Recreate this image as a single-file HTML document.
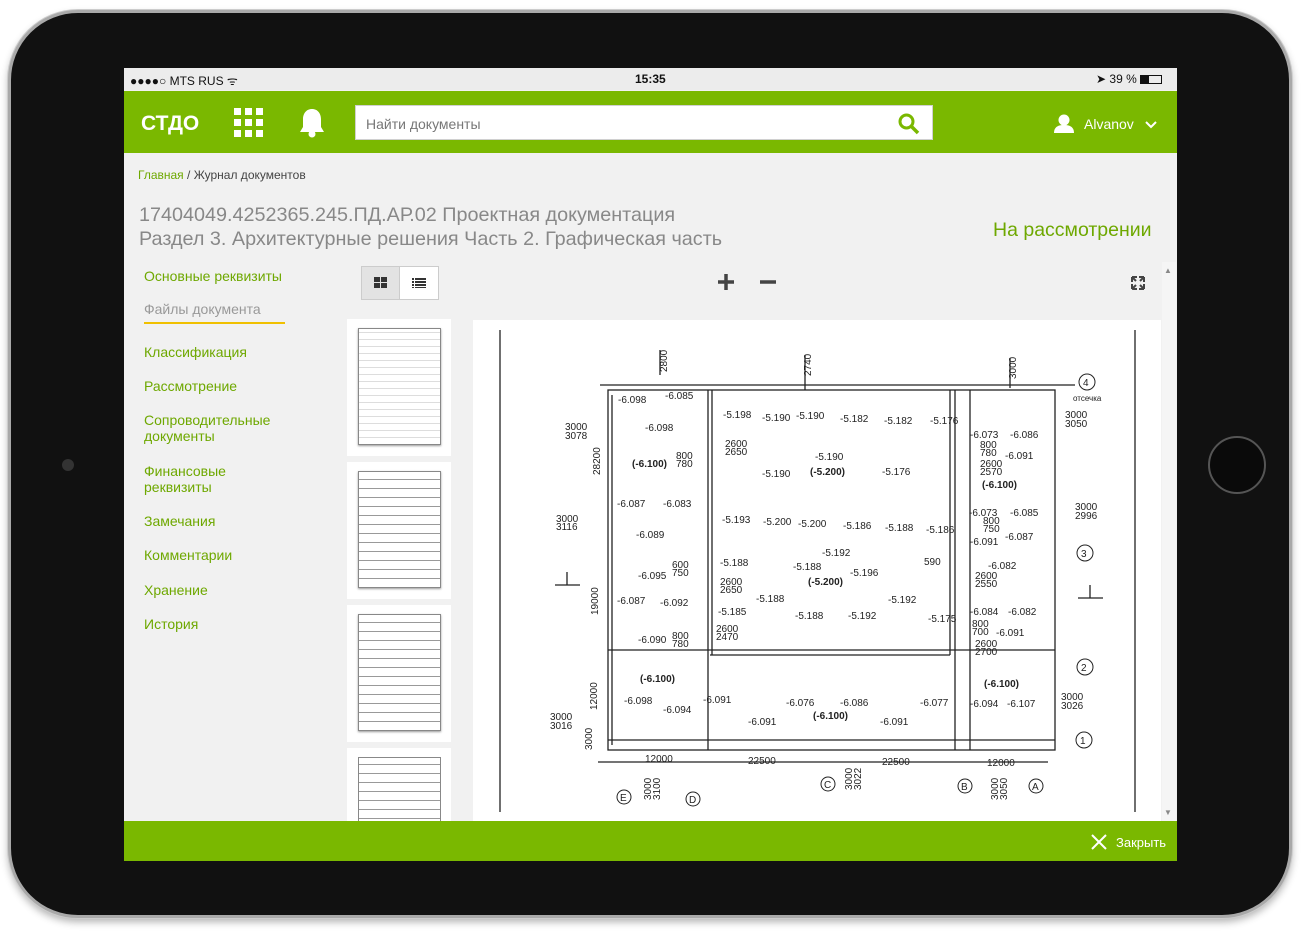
<!DOCTYPE html><html><head><meta charset="utf-8"><style>
*{margin:0;padding:0;box-sizing:border-box}
body{width:1314px;height:936px;background:#fff;position:relative;overflow:hidden;font-family:"Liberation Sans",sans-serif}
.dev{position:absolute;left:8px;top:10px;width:1284px;height:908px;border-radius:70px;background:#111;border:3px solid #a9a9a9;box-shadow:0 0 0 1px #ccc,0 4px 8px rgba(0,0,0,.3)}
.scr{position:absolute;left:124px;top:68px;width:1053px;height:793px;background:#f1f1f1;overflow:hidden}
.abs{position:absolute}
.nav a{position:absolute;left:20px;color:#6ea800;font-size:14px;line-height:16px;text-decoration:none}
svg text{font-family:"Liberation Sans",sans-serif}
</style></head><body>
<div class="dev"></div>
<div class="abs" style="left:1208px;top:436px;width:58px;height:58px;border-radius:50%;border:2px solid #555;background:#0a0a0a"></div>
<div class="abs" style="left:62px;top:459px;width:12px;height:12px;border-radius:50%;background:#333"></div>
<div class="scr">
 <div class="abs" style="left:0;top:0;width:1053px;height:22px;background:#ececec;font-size:12px;color:#111">
  <span class="abs" style="left:6px;top:4px">●●●●○ MTS RUS ᯤ</span>
  <span class="abs" style="left:511px;top:4px;font-weight:bold">15:35</span>
  <span class="abs" style="left:972px;top:4px">➤ 39 % <span style="display:inline-block;width:22px;height:9px;border:1px solid #111;vertical-align:-1px"><span style="display:block;width:8px;height:7px;background:#111"></span></span></span>
 </div>
 <div class="abs" style="left:0;top:23px;width:1053px;height:62px;background:#7ab800">
  <span class="abs" style="left:17px;top:21px;color:#fff;font-size:21px;font-weight:bold">СТДО</span>
  <svg class="abs" style="left:110px;top:17px" width="30" height="30"><g fill="#fff"><rect x="0" y="0" width="7" height="7"/><rect x="11" y="0" width="7" height="7"/><rect x="22" y="0" width="7" height="7"/><rect x="0" y="11" width="7" height="7"/><rect x="11" y="11" width="7" height="7"/><rect x="22" y="11" width="7" height="7"/><rect x="0" y="22" width="7" height="7"/><rect x="11" y="22" width="7" height="7"/><rect x="22" y="22" width="7" height="7"/></g></svg>
  <svg class="abs" style="left:173px;top:16px" width="30" height="32"><path d="M15 2c-6 0-9 5-9 10v8l-3 5h24l-3-5v-8c0-5-3-10-9-10z" fill="#fff"/><circle cx="15" cy="27" r="3.5" fill="#fff"/></svg>
  <div class="abs" style="left:231px;top:14px;width:578px;height:35px;background:#fff;border:1px solid #d0d0d0;font-size:14px;color:#777;padding:10px 10px">Найти документы</div>
  <svg class="abs" style="left:774px;top:22px" width="22" height="22"><circle cx="8.5" cy="8.5" r="6.5" stroke="#7ab800" stroke-width="3" fill="none"/><path d="M13 13l7 7" stroke="#7ab800" stroke-width="3.5"/></svg>
  <svg class="abs" style="left:929px;top:23px" width="22" height="20"><circle cx="11" cy="6" r="5.5" fill="#fff"/><path d="M1 19c0-6 4-8 10-8s10 2 10 8z" fill="#fff"/></svg>
  <span class="abs" style="left:960px;top:25px;color:#fff;font-size:14px">Alvanov</span>
  <svg class="abs" style="left:1021px;top:29px" width="12" height="10"><path d="M1 2l5 5 5-5" stroke="#fff" stroke-width="2" fill="none"/></svg>
 </div>
 <div class="abs" style="left:14px;top:100px;font-size:12px;color:#444"><span style="color:#6ea800">Главная</span> / Журнал документов</div>
 <div class="abs" style="left:15px;top:135px;font-size:19.8px;color:#888;line-height:24px">17404049.4252365.245.ПД.АР.02 Проектная документация<br>Раздел 3. Архитектурные решения Часть 2. Графическая часть</div>
 <div class="abs" style="left:869px;top:151px;font-size:19.5px;color:#6ea800">На рассмотрении</div>
 <div class="nav">
  <a style="top:200px">Основные реквизиты</a>
  <a style="top:233px;color:#999">Файлы документа</a>
  <div class="abs" style="left:20px;top:254px;width:141px;height:2px;background:#f0c000"></div>
  <a style="top:276px">Классификация</a>
  <a style="top:310px">Рассмотрение</a>
  <a style="top:344px">Сопроводительные<br>документы</a>
  <a style="top:395px">Финансовые<br>реквизиты</a>
  <a style="top:445px">Замечания</a>
  <a style="top:479px">Комментарии</a>
  <a style="top:514px">Хранение</a>
  <a style="top:548px">История</a>
 </div>
 <div class="abs" style="left:237px;top:198px;width:78px;height:34px;border:1px solid #ccc;background:#fff"><div style="width:38px;height:32px;background:#e3e3e3;border-right:1px solid #ccc"></div></div>
 <svg class="abs" style="left:250px;top:208px" width="60" height="14"><g fill="#333"><rect x="0" y="1" width="6" height="5"/><rect x="7" y="1" width="6" height="5"/><rect x="0" y="7" width="6" height="5"/><rect x="7" y="7" width="6" height="5"/><rect x="38" y="2" width="2" height="2"/><rect x="41" y="2" width="11" height="2"/><rect x="38" y="5" width="2" height="2"/><rect x="41" y="5" width="11" height="2"/><rect x="38" y="8" width="2" height="2"/><rect x="41" y="8" width="11" height="2"/><rect x="38" y="11" width="2" height="1"/><rect x="41" y="11" width="11" height="1"/></g></svg>
 <svg class="abs" style="left:590px;top:204px" width="70" height="20"><path d="M4 10h16M12 2v16" stroke="#444" stroke-width="3.5"/><path d="M46 10h16" stroke="#444" stroke-width="3.5"/></svg>
 <svg class="abs" style="left:1007px;top:208px" width="14" height="14"><path d="M1 1h5M1 1v5M1 1l4 4M13 1h-5M13 1v5M13 1l-4 4M1 13h5M1 13v-5M1 13l4-4M13 13h-5M13 13v-5M13 13l-4-4" stroke="#444" stroke-width="2"/></svg>
 <div class="abs" style="left:1038px;top:194px;width:14px;height:560px;background:#f5f5f5"></div>
 <div class="abs" style="left:1040px;top:198px;font-size:8px;color:#888">▲</div>
 <div class="abs" style="left:1040px;top:740px;font-size:8px;color:#888">▼</div>
 <div class="abs" style="left:223px;top:251px;width:104px;height:137px;background:#fff"><div style="margin:9px 0 0 11px;width:83px;height:117px;border:1px solid #888;box-shadow:0 1px 2px #999;background:repeating-linear-gradient(0deg,#fff 0 6px,#ddd 6px 7px)"></div></div>
 <div class="abs" style="left:223px;top:394px;width:104px;height:137px;background:#fff"><div style="margin:9px 0 0 11px;width:83px;height:117px;border:1px solid #888;box-shadow:0 1px 2px #999;background:repeating-linear-gradient(0deg,#fff 0 8px,#999 8px 9px)"></div></div>
 <div class="abs" style="left:223px;top:537px;width:104px;height:137px;background:#fff"><div style="margin:9px 0 0 11px;width:83px;height:117px;border:1px solid #888;box-shadow:0 1px 2px #999;background:repeating-linear-gradient(0deg,#fff 0 8px,#999 8px 9px)"></div></div>
 <div class="abs" style="left:223px;top:680px;width:104px;height:80px;background:#fff"><div style="margin:9px 0 0 11px;width:83px;height:80px;border:1px solid #888;background:repeating-linear-gradient(0deg,#fff 0 8px,#999 8px 9px)"></div></div>
 <svg class="abs" style="left:349px;top:252px" width="688" height="502" viewBox="473 320 688 502">
  <rect x="473" y="320" width="688" height="502" fill="#fff"/>
  <g stroke="#222" fill="none" stroke-width="1.3">
   <path d="M500 330V812M1135 330V812"/>
   <rect x="608" y="390" width="447" height="360"/>
   <path d="M612 395v350M708 390v360M712 390v265M950 390v265M955 390v360M970 390v360M710 655h240M608 650h447M608 740h447"/>
   <path d="M660 350v25M805 355v35M1010 358v30M600 385h475M598 762h450"/>
   <path d="M555 585h25M567 572v13M1078 598h25M1090 585v13"/>
  </g>
  <g fill="none" stroke="#222"><circle cx="1087" cy="382" r="8"/><circle cx="1085" cy="553" r="8"/><circle cx="1085" cy="667" r="8"/><circle cx="1084" cy="740" r="8"/><circle cx="624" cy="797" r="7"/><circle cx="693" cy="799" r="7"/><circle cx="828" cy="784" r="7"/><circle cx="965" cy="786" r="7"/><circle cx="1036" cy="786" r="7"/></g>
  <g font-size="10" fill="#222">
   <text x="1083" y="386">4</text><text x="1081" y="557">3</text><text x="1081" y="671">2</text><text x="1080" y="744">1</text><text x="620" y="801">E</text><text x="689" y="803">D</text><text x="824" y="788">C</text><text x="961" y="790">B</text><text x="1032" y="790">A</text>
   <text x="618" y="403">-6.098</text><text x="665" y="399">-6.085</text><text x="645" y="431">-6.098</text><text x="723" y="418">-5.198</text><text x="762" y="421">-5.190</text><text x="796" y="419">-5.190</text><text x="840" y="422">-5.182</text><text x="884" y="424">-5.182</text><text x="930" y="424">-5.176</text>
   <text x="970" y="438">-6.073</text><text x="1010" y="438">-6.086</text><text x="1065" y="418">3000</text><text x="1065" y="427">3050</text>
   <text x="565" y="430">3000</text><text x="565" y="439">3078</text><text x="725" y="447">2600</text><text x="725" y="455">2650</text><text x="676" y="459">800</text><text x="676" y="467">780</text>
   <text x="632" y="467" font-weight="bold">(-6.100)</text><text x="815" y="460">-5.190</text><text x="810" y="475" font-weight="bold">(-5.200)</text><text x="762" y="477">-5.190</text><text x="882" y="475">-5.176</text>
   <text x="980" y="448">800</text><text x="980" y="456">780</text><text x="1005" y="459">-6.091</text><text x="980" y="467">2600</text><text x="980" y="475">2570</text><text x="982" y="488" font-weight="bold">(-6.100)</text>
   <text x="617" y="507">-6.087</text><text x="663" y="507">-6.083</text><text x="556" y="522">3000</text><text x="556" y="530">3116</text><text x="636" y="538">-6.089</text>
   <text x="722" y="523">-5.193</text><text x="763" y="525">-5.200</text><text x="798" y="527">-5.200</text><text x="843" y="529">-5.186</text><text x="885" y="531">-5.188</text><text x="926" y="533">-5.186</text>
   <text x="969" y="516">-6.073</text><text x="1010" y="516">-6.085</text><text x="1075" y="510">3000</text><text x="1075" y="519">2996</text><text x="983" y="524">800</text><text x="983" y="532">750</text><text x="970" y="545">-6.091</text><text x="1005" y="540">-6.087</text>
   <text x="822" y="556">-5.192</text><text x="720" y="566">-5.188</text><text x="793" y="570">-5.188</text><text x="850" y="576">-5.196</text><text x="808" y="585" font-weight="bold">(-5.200)</text><text x="924" y="565">590</text>
   <text x="638" y="579">-6.095</text><text x="672" y="568">600</text><text x="672" y="576">750</text><text x="720" y="585">2600</text><text x="720" y="593">2650</text><text x="988" y="569">-6.082</text><text x="975" y="579">2600</text><text x="975" y="587">2550</text>
   <text x="617" y="604">-6.087</text><text x="660" y="606">-6.092</text><text x="756" y="602">-5.188</text><text x="718" y="615">-5.185</text><text x="888" y="603">-5.192</text>
   <text x="970" y="615">-6.084</text><text x="1008" y="615">-6.082</text><text x="795" y="619">-5.188</text><text x="848" y="619">-5.192</text><text x="928" y="622">-5.175</text>
   <text x="716" y="632">2600</text><text x="716" y="640">2470</text><text x="638" y="643">-6.090</text><text x="672" y="639">800</text><text x="672" y="647">780</text>
   <text x="972" y="627">800</text><text x="972" y="635">700</text><text x="996" y="636">-6.091</text><text x="975" y="647">2600</text><text x="975" y="655">2700</text>
   <text x="640" y="682" font-weight="bold">(-6.100)</text><text x="984" y="687" font-weight="bold">(-6.100)</text><text x="624" y="704">-6.098</text><text x="663" y="713">-6.094</text><text x="703" y="703">-6.091</text><text x="786" y="706">-6.076</text><text x="840" y="706">-6.086</text><text x="920" y="706">-6.077</text><text x="970" y="707">-6.094</text><text x="1007" y="707">-6.107</text><text x="1061" y="700">3000</text><text x="1061" y="709">3026</text>
   <text x="748" y="725">-6.091</text><text x="813" y="719" font-weight="bold">(-6.100)</text><text x="880" y="725">-6.091</text><text x="550" y="720">3000</text><text x="550" y="729">3016</text>
   <text x="645" y="762">12000</text><text x="748" y="764">22500</text><text x="882" y="765">22500</text><text x="987" y="766">12000</text><text x="1073" y="401" font-size="8">отсечка</text>
  </g>
  <g font-size="10" fill="#222">
   <text transform="translate(667,372) rotate(-90)">2800</text><text transform="translate(811,376) rotate(-90)">2740</text><text transform="translate(1016,379) rotate(-90)">3000</text>
   <text transform="translate(600,475) rotate(-90)">28200</text><text transform="translate(598,615) rotate(-90)">19000</text><text transform="translate(597,710) rotate(-90)">12000</text><text transform="translate(592,750) rotate(-90)">3000</text>
   <text transform="translate(651,800) rotate(-90)">3000</text><text transform="translate(660,800) rotate(-90)">3100</text><text transform="translate(852,790) rotate(-90)">3000</text><text transform="translate(861,790) rotate(-90)">3022</text><text transform="translate(998,800) rotate(-90)">3000</text><text transform="translate(1007,800) rotate(-90)">3050</text>
  </g>
 </svg>
 <div class="abs" style="left:0;top:753px;width:1053px;height:40px;background:#7ab800">
  <svg class="abs" style="left:967px;top:13px" width="16" height="16"><path d="M1 1l14 14M15 1L1 15" stroke="#fff" stroke-width="2"/></svg>
  <span class="abs" style="left:992px;top:14px;color:#fff;font-size:13px">Закрыть</span>
 </div>
</div>
</body></html>
